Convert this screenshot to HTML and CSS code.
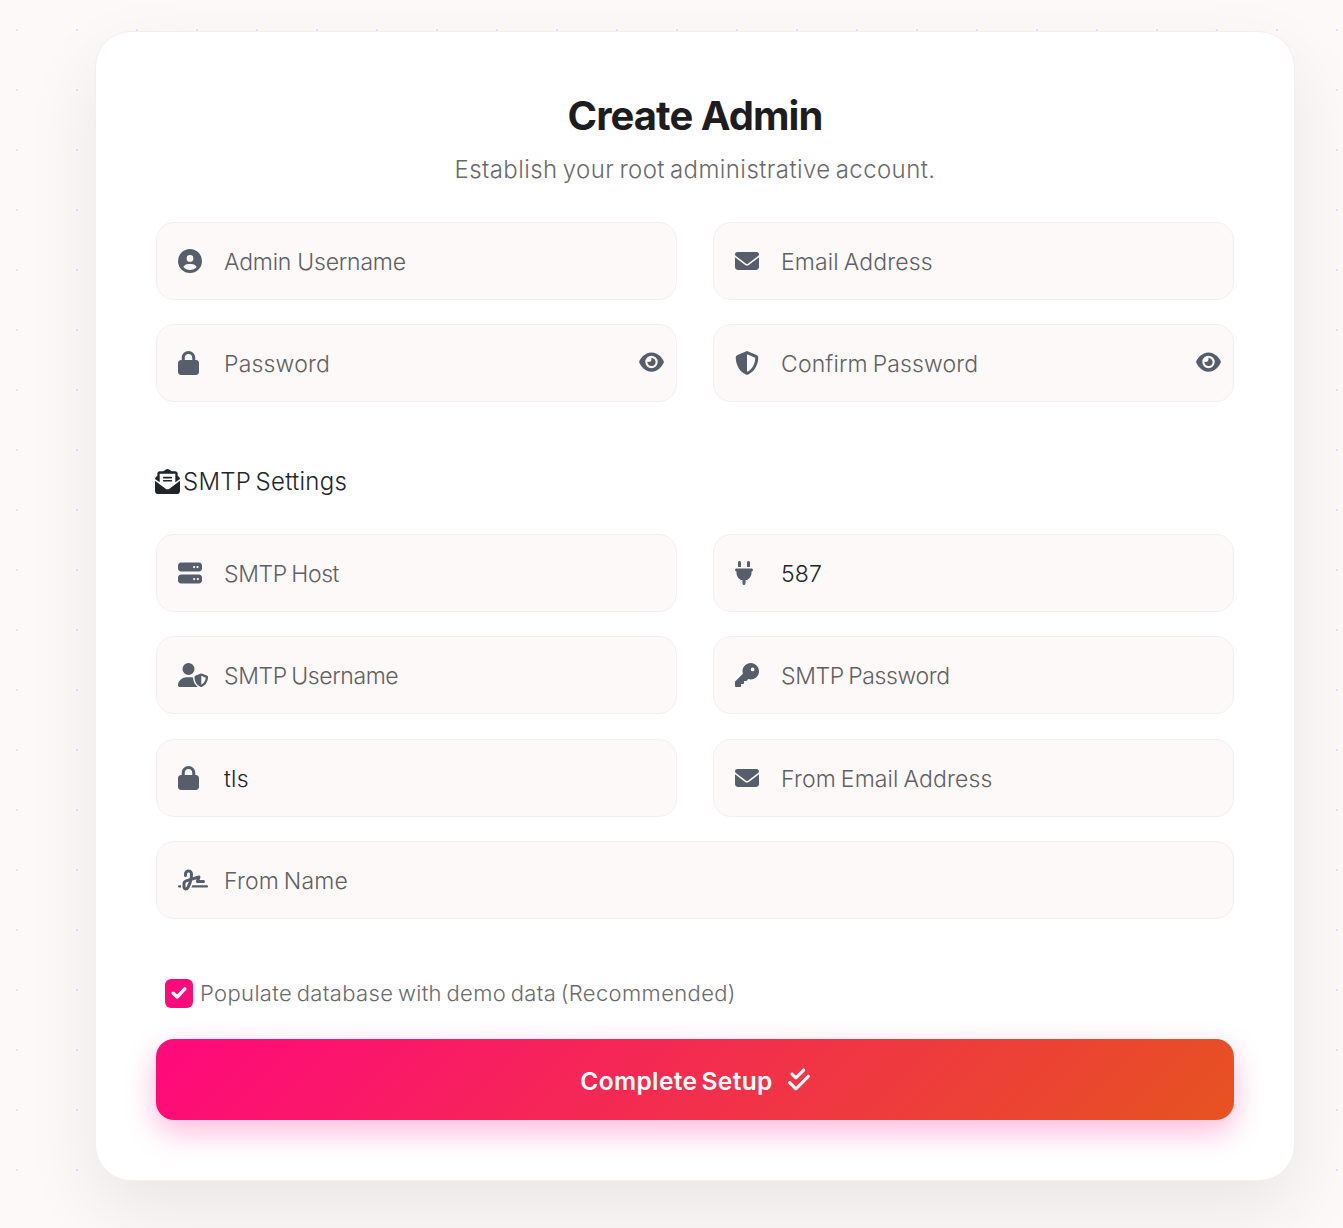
FILE: index.html
```html
<!DOCTYPE html>
<html lang="en">
<head>
<meta charset="utf-8">
<title>Create Admin</title>
<link rel="stylesheet" href="styles.css">
</head>
<body>
<svg class="sprite" aria-hidden="true">
  <symbol id="envelope" viewBox="0 0 512 512"><path d="M48 64C21.5 64 0 85.5 0 112c0 15.1 7.1 29.3 19.2 38.4L236.8 313.6c11.4 8.5 27 8.5 38.4 0L492.8 150.4c12.1-9.1 19.2-23.3 19.2-38.4c0-26.5-21.5-48-48-48H48zM0 176V384c0 35.3 28.7 64 64 64H448c35.3 0 64-28.7 64-64V176L294.4 339.2c-22.8 17.1-54 17.1-76.8 0L0 176z"/></symbol>
  <symbol id="lock" viewBox="0 0 448 512"><path d="M144 144v48H304V144c0-44.2-35.8-80-80-80s-80 35.8-80 80zM80 192V144C80 64.5 144.5 0 224 0s144 64.5 144 144v48h16c35.3 0 64 28.7 64 64V448c0 35.3-28.7 64-64 64H64c-35.3 0-64-28.7-64-64V256c0-35.3 28.7-64 64-64H80z"/></symbol>
  <symbol id="eye" viewBox="0 0 576 512"><path d="M288 32c-80.8 0-145.5 36.8-192.6 80.6C48.6 156 17.3 208 2.5 243.7c-3.3 7.9-3.3 16.7 0 24.6C17.3 304 48.6 356 95.4 399.4C142.5 443.2 207.2 480 288 480s145.5-36.8 192.6-80.6c46.8-43.5 78.1-95.4 93-131.1c3.3-7.9 3.3-16.7 0-24.6c-14.9-35.7-46.2-87.7-93-131.1C433.5 68.8 368.8 32 288 32zM144 256a144 144 0 1 1 288 0 144 144 0 1 1 -288 0zm144-64c0 35.3-28.7 64-64 64c-7.1 0-13.9-1.2-20.3-3.3c-5.5-1.8-11.9 1.6-11.7 7.4c.3 6.9 1.3 13.8 3.2 20.7c13.7 51.2 66.4 81.6 117.6 67.9s81.6-66.4 67.9-117.6c-11.1-41.5-47.8-69.4-88.6-71.1c-5.8-.2-9.2 6.1-7.4 11.7c2.1 6.4 3.3 13.2 3.3 20.3z"/></symbol>
</svg>

<main class="card">
  <header class="head">
    <h1 class="title">Create Admin</h1>
    <p class="subtitle">Establish your root administrative account.</p>
  </header>

  <form class="form">
    <div class="grid">
      <label class="field">
        <svg class="icon" viewBox="0 0 512 512"><path d="M399 384.2C376.9 345.8 335.4 320 288 320H224c-47.4 0-88.9 25.8-111 64.2c35.2 39.2 86.2 63.8 143 63.8s107.8-24.7 143-63.8zM0 256a256 256 0 1 1 512 0A256 256 0 1 1 0 256zm256 16a72 72 0 1 0 0-144 72 72 0 1 0 0 144z"/></svg>
        <input class="input snug" type="text" placeholder="Admin Username">
      </label>
      <label class="field">
        <svg class="icon"><use href="#envelope"/></svg>
        <input class="input loose" type="email" placeholder="Email Address">
      </label>
      <label class="field">
        <svg class="icon lock"><use href="#lock"/></svg>
        <input class="input looser" type="password" placeholder="Password">
        <svg class="eye"><use href="#eye"/></svg>
      </label>
      <label class="field">
        <svg class="icon" viewBox="0 0 512 512"><path d="M256 0c4.6 0 9.2 1 13.4 2.9L457.7 82.8c22 9.3 38.4 31 38.3 57.2c-.5 99.2-41.3 280.7-213.6 363.2c-16.7 8-36.1 8-52.8 0C57.3 420.7 16.5 239.2 16 140c-.1-26.2 16.3-47.9 38.3-57.2L242.7 2.9C246.8 1 251.4 0 256 0zm0 66.8V444.8C394 378 431.1 230.1 432 141.4L256 66.8l0 0z"/></svg>
        <input class="input loose" type="password" placeholder="Confirm Password">
        <svg class="eye"><use href="#eye"/></svg>
      </label>
    </div>

    <h2 class="section">
      <svg class="section-icon" viewBox="0 0 512 512"><path d="M215.4 96H144 107.8 96v8.8V144v40.4 89L.2 202.5c1.6-18.1 10.9-34.9 25.7-45.8L48 140.3V96c0-26.5 21.5-48 48-48h76.6l49.9-36.9C232.2 3.9 243.9 0 256 0s23.8 3.9 33.5 11L339.4 48H416c26.5 0 48 21.5 48 48v44.3l22.1 16.4c14.8 10.9 24.1 27.7 25.7 45.8L416 273.4v-89V144 104.8 96H404.2 368 296.6 215.4zM0 448V242.1L217.6 403.3c11.1 8.2 24.6 12.7 38.4 12.7s27.3-4.4 38.4-12.7L512 242.1V448v0c0 35.3-28.7 64-64 64H64c-35.3 0-64-28.7-64-64v0zM176 160H336c8.8 0 16 7.2 16 16s-7.2 16-16 16H176c-8.8 0-16-7.2-16-16s7.2-16 16-16zm0 64H336c8.8 0 16 7.2 16 16s-7.2 16-16 16H176c-8.8 0-16-7.2-16-16s7.2-16 16-16z"/></svg>
      SMTP Settings
    </h2>

    <div class="grid smtp">
      <label class="field">
        <svg class="icon" viewBox="0 0 512 512"><path d="M64 32C28.7 32 0 60.7 0 96v64c0 35.3 28.7 64 64 64H448c35.3 0 64-28.7 64-64V96c0-35.3-28.7-64-64-64H64zm280 72a24 24 0 1 1 0 48 24 24 0 1 1 0-48zm48 24a24 24 0 1 1 48 0 24 24 0 1 1 -48 0zM64 288c-35.3 0-64 28.7-64 64v64c0 35.3 28.7 64 64 64H448c35.3 0 64-28.7 64-64V352c0-35.3-28.7-64-64-64H64zm280 72a24 24 0 1 1 0 48 24 24 0 1 1 0-48zm56 24a24 24 0 1 1 48 0 24 24 0 1 1 -48 0z"/></svg>
        <input class="input tight" type="text" placeholder="SMTP Host">
      </label>
      <label class="field">
        <svg class="icon plug" viewBox="0 0 384 512"><path d="M96 0C78.3 0 64 14.3 64 32v96h64V32c0-17.7-14.3-32-32-32zM288 0c-17.7 0-32 14.3-32 32v96h64V32c0-17.7-14.3-32-32-32zM32 160c-17.7 0-32 14.3-32 32s14.3 32 32 32v32c0 77.4 55 142 128 156.8V480c0 17.7 14.3 32 32 32s32-14.3 32-32V412.8C297 398 352 333.4 352 256V224c17.7 0 32-14.3 32-32s-14.3-32-32-32H32z"/></svg>
        <input class="input looser" type="text" value="587">
      </label>
      <label class="field">
        <svg class="icon wide" viewBox="0 0 640 512"><path d="M224 256A128 128 0 1 0 224 0a128 128 0 1 0 0 256zm-45.7 48C79.8 304 0 383.8 0 482.3C0 498.7 13.3 512 29.7 512H418.3c1.8 0 3.5-.2 5.3-.5c-76.3-55.1-99.8-141-103.1-200.2c-16.1-4.8-33.1-7.3-50.7-7.3H178.3zm308.8-78.3l-120 48C358 277.4 352 286.2 352 296c0 63.3 25.9 168.8 134.8 214.2c5.9 2.5 12.6 2.5 18.5 0C614.1 464.8 640 359.3 640 296c0-9.8-6-18.6-15.1-22.3l-120-48c-5.7-2.3-12.1-2.3-17.8 0zM591.4 312c-3.9 50.7-27.2 116.7-95.4 149.7V273.8L591.4 312z"/></svg>
        <input class="input tight" type="text" placeholder="SMTP Username">
      </label>
      <label class="field">
        <svg class="icon" viewBox="0 0 512 512"><path d="M336 352c97.2 0 176-78.8 176-176S433.2 0 336 0S160 78.8 160 176c0 18.7 2.9 36.8 8.3 53.7L7 391c-4.5 4.5-7 10.6-7 17v80c0 13.3 10.7 24 24 24h80c13.3 0 24-10.7 24-24V448h40c13.3 0 24-10.7 24-24V384h40c6.4 0 12.5-2.5 17-7l33.3-33.3c16.9 5.4 35 8.3 53.7 8.3zM376 96a40 40 0 1 1 0 80 40 40 0 1 1 0-80z"/></svg>
        <input class="input tight" type="password" placeholder="SMTP Password">
      </label>
      <label class="field">
        <svg class="icon lock"><use href="#lock"/></svg>
        <input class="input looser" type="text" value="tls">
      </label>
      <label class="field">
        <svg class="icon"><use href="#envelope"/></svg>
        <input class="input loose" type="email" placeholder="From Email Address">
      </label>
      <label class="field full">
        <svg class="icon wide" viewBox="0 0 640 512"><path d="M192 128c0-17.7 14.3-32 32-32s32 14.3 32 32v7.8c0 27.7-2.4 55.3-7.1 82.5l-84.4 25.3c-40.6 12.2-68.4 49.6-68.4 92v71.9c0 40 32.5 72.5 72.5 72.5c26 0 50-13.9 62.9-36.5l13.9-24.3c26.8-47 46.5-97.7 58.4-150.5l94.4-28.3-12.5 37.5c-3.3 9.8-1.6 20.5 4.4 28.8s15.7 13.3 26 13.3H544c17.7 0 32-14.3 32-32s-14.3-32-32-32H460.4l18-53.9c3.8-11.3 .9-23.8-7.4-32.4s-20.7-11.8-32.2-8.4L316.4 198.1c2.4-20.7 3.6-41.4 3.6-62.3V128c0-53-43-96-96-96s-96 43-96 96v32c0 17.7 14.3 32 32 32s32-14.3 32-32V128zm-9.2 177l49-14.7c-10.4 33.8-24.5 66.4-42.1 97.2l-13.9 24.3c-1.5 2.6-4.3 4.3-7.4 4.3c-4.7 0-8.5-3.8-8.5-8.5V335.6c0-14.1 9.3-26.6 22.8-30.7zM24 368c-13.3 0-24 10.7-24 24s10.7 24 24 24H64.3c-.2-2.8-.3-5.6-.3-8.5V368H24zm592 48c13.3 0 24-10.7 24-24s-10.7-24-24-24H305.9c-6.7 16.3-14.2 32.3-22.3 48H616z"/></svg>
        <input class="input loose" type="text" placeholder="From Name">
      </label>
    </div>

    <label class="demo">
      <span class="check"><svg class="check-icon" viewBox="0 0 16 14"><path d="M2.2 7.2 6.2 11 13.8 2.8"/></svg></span>
      <span class="demo-text">Populate database with demo data (Recommended)</span>
    </label>

    <button class="submit" type="button">
      <span>Complete Setup</span>
      <svg class="submit-icon" viewBox="0 0 448 512"><path d="M342.6 86.6c12.5-12.5 12.5-32.8 0-45.3s-32.8-12.5-45.3 0L160 178.7l-57.4-57.4c-12.5-12.5-32.8-12.5-45.3 0s-12.5 32.8 0 45.3l80 80c12.5 12.5 32.8 12.5 45.3 0l160-160zm96 128c12.5-12.5 12.5-32.8 0-45.3s-32.8-12.5-45.3 0L160 402.7 54.6 297.4c-12.5-12.5-32.8-12.5-45.3 0s-12.5 32.8 0 45.3l128 128c12.5 12.5 32.8 12.5 45.3 0l256-256z"/></svg>
    </button>
  </form>
</main>
</body>
</html>
```

FILE: styles.css
```css
* {
  box-sizing: border-box;
}

body {
  margin: 0;
  height: 1228px;
  overflow: hidden;
  padding: 31px 48px 0 95px;
  background-color: #fdf9f8;
  /* grid of 2px dots */
  background-image: conic-gradient(at 2px 2px, transparent 75%, #e8e0fd 0);
  background-size: 60px 60px;
  background-position: 16px 29px;
  font-family: Inter, "Liberation Sans", sans-serif;
  font-weight: 350;
  color: #212529;
}

.sprite {
  display: none;
}

svg {
  fill: currentColor;
}

.card {
  width: 1200px;
  height: 1150px;
  padding: 60px;
  border: 1px solid #f1f0f0;
  border-radius: 36px;
  background: #fff;
  box-shadow: 0 30px 75px rgba(0, 0, 0, 0.08);
}

.head {
  text-align: center;
}

.title {
  margin: 0;
  font-size: 40px;
  line-height: 48px;
  font-weight: 700;
  letter-spacing: -0.95px;
  color: #1d1d1f;
}

.subtitle {
  margin: 12px 0 0;
  font-size: 24px;
  line-height: 36px;
  letter-spacing: 0.41px;
  word-spacing: -2px;
  color: #6a6a6a;
}

.grid {
  display: grid;
  grid-template-columns: 1fr 1fr;
  gap: 24.3px 36px;
}

.form {
  margin: 34px -1px 0;
  padding: 0 1px;
}

.field {
  display: flex;
  align-items: center;
  height: 78px;
  padding: 0 12px 0 21px;
  border: 1px solid #f1eff0;
  border-radius: 18px;
  background: #fdf9f8;
  color: #565e6c;
}

.full {
  grid-column: 1 / -1;
}

.icon {
  flex: none;
  width: 24px;
  height: 24px;
  margin-right: 22px;
}

.lock {
  width: 21px;
  margin-right: 25px;
}

.plug {
  width: 18px;
  margin-right: 28px;
}

.wide {
  width: 30px;
  margin-right: 16px;
}

.input {
  flex: 1;
  min-width: 0;
  padding: 1px 0 0;
  border: 0;
  outline: 0;
  background: none;
  font: inherit;
  font-size: 23px;
  line-height: 34px;
  color: #212529;
}

.smtp .input {
  padding-top: 2px;
}

.input::placeholder {
  color: #5f6062;
  opacity: 1;
}

.snug {
  letter-spacing: -0.22px;
}

.tight {
  letter-spacing: -0.4px;
  word-spacing: -1.5px;
}

.loose {
  letter-spacing: 0.14px;
  word-spacing: -1.7px;
}

.looser {
  letter-spacing: 0.2px;
}

.eye {
  flex: none;
  width: 25px;
  height: 22px;
  margin-bottom: 2px;
}

.section {
  display: flex;
  align-items: center;
  gap: 3px;
  margin: 60.7px 0 34px -1px;
  font-size: 24px;
  line-height: 37px;
  font-weight: 350;
  letter-spacing: 0.25px;
  word-spacing: -2.5px;
}

.section-icon {
  width: 25px;
  height: 25px;
}

.demo {
  display: flex;
  align-items: center;
  gap: 7px;
  margin: 60.1px 0 31px 9px;
  height: 29px;
  font-size: 22px;
  letter-spacing: 0.36px;
  word-spacing: -2px;
  color: #6a6a6a;
}

.demo-text {
  padding-bottom: 1px;
}

.check {
  display: flex;
  align-items: center;
  justify-content: center;
  width: 28px;
  height: 29px;
  border-radius: 6px;
  background: #ff0a7b;
}

.check-icon {
  width: 16px;
  height: 14px;
  fill: none;
  stroke: #fff;
  stroke-width: 3.4;
  stroke-linecap: round;
  stroke-linejoin: round;
}

.submit {
  display: flex;
  align-items: center;
  justify-content: center;
  gap: 15px;
  width: 100%;
  height: 81px;
  padding: 4px 0 0;
  border: 0;
  border-radius: 18px;
  background: linear-gradient(135deg, #ff087c, #e65320);
  box-shadow: 0 12px 30px rgba(255, 8, 124, 0.28);
  font: inherit;
  font-size: 24.5px;
  font-weight: 600;
  letter-spacing: 0.38px;
  word-spacing: -2.5px;
  color: #fff;
}

.submit-icon {
  width: 22px;
  height: 25px;
  margin-bottom: 4px;
}
```
